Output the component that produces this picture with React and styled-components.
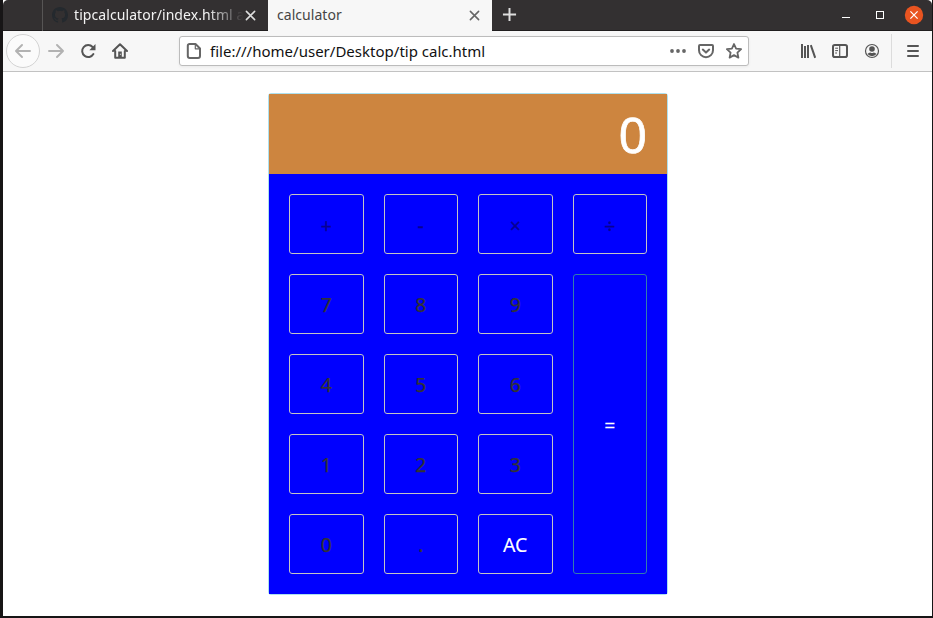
import React from "react";
import styled, { createGlobalStyle } from "styled-components";

const Global = createGlobalStyle`
  * { box-sizing: border-box; }
  body { margin: 0; background: #fff; font-family: "Noto Sans", "Open Sans", sans-serif; }
  button { font: inherit; background: none; border: 0; padding: 0; }
`;

const Window = styled.div`
  width: 933px;
  height: 618px;
  display: flex;
  flex-direction: column;
  overflow: hidden;
  background: #fff;
  border: solid #171516;
  border-width: 0 1px 2px 3px;
`;

const TabBar = styled.div`
  height: 31px;
  flex: none;
  display: flex;
  background: #333031;
  border-radius: 5px 5px 0 0;
  box-shadow: inset 0 -1px #201e1f;
`;

const PinSpace = styled.div`
  width: 40px;
  height: 31px;
  border-right: 1px solid #575555;
`;

const Tab = styled.div`
  width: ${(p) => p.$width}px;
  height: 31px;
  display: flex;
  align-items: center;
  padding: 0 12px 1px 9px;
  color: ${(p) => (p.$active ? "#454545" : "#f3f3f3")};
  background: ${(p) => (p.$active ? "#f7f7f7" : "transparent")};
`;

const TabTitle = styled.span`
  flex: 1;
  min-width: 0;
  overflow: hidden;
  white-space: nowrap;
  font-size: 14px;
  line-height: 20px;
  letter-spacing: ${(p) => p.$tracking}px;
  margin-left: ${(p) => p.$indent || 0}px;
  mask-image: ${(p) => (p.$fade ? "linear-gradient(to right, #000 78%, transparent 99%)" : "none")};
`;

const NewTab = styled.button`
  width: 34px;
  display: grid;
  place-items: center;
  padding-bottom: 2px;
`;

const WindowControls = styled.div`
  margin-left: auto;
  display: flex;
  padding-right: 1px;
`;

const Control = styled.button`
  width: 34px;
  height: 30px;
  display: grid;
  place-items: center;
`;

const Toolbar = styled.div`
  height: 41px;
  flex: none;
  display: flex;
  align-items: center;
  background: #f7f7f7;
  border-bottom: 1px solid #c2c2c2;
`;

const Back = styled.button`
  width: 34px;
  height: 34px;
  margin-left: 3px;
  border: 1px solid #d3d3d3;
  border-radius: 50%;
  display: grid;
  place-items: center;
  color: #b2b2b2;
  background: #fbfbfb;
`;

const Tool = styled.button`
  width: 32px;
  height: 32px;
  display: grid;
  place-items: center;
  color: ${(p) => (p.$disabled ? "#b2b2b2" : "#555")};
`;

const AddressBar = styled.div`
  width: 570px;
  height: 30px;
  margin: 0 43px 0 43px;
  padding: 0 6px;
  display: flex;
  align-items: center;
  border: 1px solid #bcbcbc;
  border-radius: 3px;
  background: #fff;
  color: #666;
  box-shadow: 0 1px 3px rgba(0, 0, 0, 0.06);
`;

const Address = styled.span`
  margin: 0 auto 0 8px;
  font-size: 15px;
  line-height: 20px;
  letter-spacing: 0.01px;
  white-space: nowrap;
  color: #111;
`;

const AddressActions = styled.div`
  display: flex;
  gap: 12px;
`;

const Divider = styled.span`
  width: 1px;
  height: 34px;
  margin: 0 5px 0 3px;
  background: #dcdcdc;
`;

const Page = styled.main`
  flex: 1;
  display: flex;
  justify-content: center;
  align-items: flex-start;
  padding: 21px 0 0 1px;
`;

const Calculator = styled.section`
  width: 400px;
  border: 1px solid #ade0ee;
  border-radius: 3px;
`;

const Display = styled.output`
  display: block;
  height: 80px;
  padding-right: 20px;
  background: #cd853f;
  color: #fff;
  font-size: 50px;
  line-height: 80px;
  text-align: right;
  -webkit-text-stroke: 0.7px #fff;
`;

const Keys = styled.div`
  padding: 20px;
  display: grid;
  grid-template-columns: repeat(4, 1fr);
  grid-template-rows: repeat(5, 60px);
  gap: 20px;
  background: #00f;
`;

const tones = { operator: "#080090", digit: "#333", light: "#fff" };

const Key = styled.button`
  grid-area: ${(p) => (p.$tall ? "2 / 4 / 6 / 5" : "auto")};
  border: 1px solid ${(p) => (p.$tall ? "#337cac" : "#c4c4c4")};
  border-radius: 3px;
  color: ${(p) => tones[p.$tone]};
  font-size: 19.5px;
  line-height: 26px;
  padding-top: ${(p) => (p.$tall || p.$tone === "operator" ? 4 : 2)}px;
  -webkit-text-stroke: ${(p) => (p.$tone === "light" ? 0.1 : 0.25)}px currentColor;
`;

const Icon = ({ size = 16, width = 2, children, ...rest }) => (
  <svg width={size} height={size} viewBox="0 0 16 16" fill="none" stroke="currentColor"
    strokeWidth={width} strokeLinecap="round" strokeLinejoin="round" {...rest}>
    {children}
  </svg>
);

const CloseIcon = ({ width = 1.6, color }) => (
  <Icon size={11} width={width * 1.4} color={color}><path d="M2 2l12 12M14 2L2 14" /></Icon>
);

const GithubMark = () => (
  <svg width="16" height="16" viewBox="0 0 16 16" fill="#24292e">
    <path d="M8 0C3.58 0 0 3.58 0 8c0 3.54 2.29 6.53 5.47 7.59.4.07.55-.17.55-.38v-1.49c-2.01.37-2.53-.49-2.69-.94-.09-.23-.48-.94-.82-1.13-.28-.15-.68-.52-.01-.53.63-.01 1.08.58 1.23.82.72 1.21 1.87.87 2.33.66.07-.52.28-.87.51-1.07-1.78-.2-3.64-.89-3.64-3.95 0-.87.31-1.59.82-2.15-.08-.2-.36-1.02.08-2.12 0 0 .67-.21 2.2.82a7.6 7.6 0 014 0c1.53-1.04 2.2-.82 2.2-.82.44 1.1.16 1.92.08 2.12.51.56.82 1.27.82 2.15 0 3.07-1.87 3.75-3.65 3.95.29.25.54.73.54 1.48v2.2c0 .21.15.46.55.38A8 8 0 0016 8c0-4.42-3.58-8-8-8z" />
  </svg>
);

const keys = [
  ["+", "operator"], ["-", "operator"], ["×", "operator"], ["÷", "operator"],
  ["7", "digit"], ["8", "digit"], ["9", "digit"],
  ["4", "digit"], ["5", "digit"], ["6", "digit"],
  ["1", "digit"], ["2", "digit"], ["3", "digit"],
  ["0", "digit"], [".", "digit"], ["AC", "light"],
];

export default function App() {
  return (
    <Window>
      <Global />
      <TabBar>
        <PinSpace />
        <Tab $width={225}>
          <GithubMark />
          <TabTitle $fade $indent={6} $tracking={0.08}>tipcalculator/index.html a</TabTitle>
          <CloseIcon color="#dedede" />
        </Tab>
        <Tab $active $width={224}>
          <TabTitle $tracking={0.05}>calculator</TabTitle>
          <CloseIcon color="#666" />
        </Tab>
        <NewTab aria-label="New tab">
          <Icon width={2.1} size={15} color="#dedede"><path d="M8 1v14M1 8h14" strokeLinecap="butt" /></Icon>
        </NewTab>
        <WindowControls>
          <Control aria-label="Minimize">
            <svg width="8" height="8" viewBox="0 0 8 8"><path d="M0 6.5h8" stroke="#fff" /></svg>
          </Control>
          <Control aria-label="Maximize">
            <svg width="8" height="8" viewBox="0 0 8 8" fill="none"><rect x=".5" y=".5" width="7" height="7" stroke="#fff" /></svg>
          </Control>
          <Control aria-label="Close">
            <svg width="20" height="20" viewBox="0 0 20 20">
              <circle cx="10" cy="10" r="9.2" fill="#e95420" />
              <path d="M6.4 6.4l7.2 7.2M13.6 6.4l-7.2 7.2" stroke="#fff" strokeWidth="1.2" />
            </svg>
          </Control>
        </WindowControls>
      </TabBar>

      <Toolbar>
        <Back aria-label="Back">
          <Icon width={1.9}><path d="M15 8H1.5M7 2L1 8l6 6" /></Icon>
        </Back>
        <Tool $disabled aria-label="Forward">
          <Icon width={1.9}><path d="M1 8h13.5M9 2l6 6-6 6" /></Icon>
        </Tool>
        <Tool aria-label="Reload">
          <Icon>
            <path d="M13.4 11A6 6 0 1 1 12.6 4" />
            <path d="M15.5 1v6.2H9.3z" fill="currentColor" stroke="none" />
          </Icon>
        </Tool>
        <Tool aria-label="Home">
          <Icon>
            <path d="M1 8l7-6.8L15 8M3.2 8v6.8h9.6V8" />
            <path d="M6.2 14.5V8.5h3.6v6z" fill="currentColor" stroke="none" />
            <path d="M8.4 11.2v.1" stroke="#f7f7f7" strokeWidth="1" />
          </Icon>
        </Tool>
        <AddressBar>
          <Icon>
            <path d="M3.5 1h6L14 5.5V13a2 2 0 0 1-2 2H3.8a2 2 0 0 1-2-2V2.7A1.7 1.7 0 0 1 3.5 1z" />
            <path d="M9.3 1.5v4.3h4.4" strokeWidth="1.2" />
          </Icon>
          <Address>file:///home/user/Desktop/tip calc.html</Address>
          <AddressActions>
            <Icon><g fill="currentColor" stroke="none"><circle cx="2" cy="8" r="1.9" /><circle cx="8" cy="8" r="1.9" /><circle cx="14" cy="8" r="1.9" /></g></Icon>
            <Icon>
              <path d="M2 2h12a1 1 0 0 1 1 1v4.2a7 7 0 0 1-14 0V3a1 1 0 0 1 1-1z" />
              <path d="M4.8 6.6L8 9.6l3.2-3" />
            </Icon>
            <Icon width={1.8}><path d="M8 1l2.1 4.6 5 .6-3.7 3.4 1 5L8 12.1l-4.4 2.5 1-5L.9 6.2l5-.6z" /></Icon>
          </AddressActions>
        </AddressBar>
        <Tool aria-label="Library">
          <Icon><path d="M2 1v14M5 3v12M8 2v13M10.8 2.2l4.4 12.6" strokeLinecap="butt" /></Icon>
        </Tool>
        <Tool aria-label="Sidebars">
          <Icon>
            <rect x="1" y="2" width="14" height="12" rx="1.8" />
            <path d="M7.7 2v12" strokeWidth="1.2" />
            <path d="M3.2 5.2H6M3.2 7.6H6M3.2 10H5" strokeWidth="1" strokeLinecap="butt" />
          </Icon>
        </Tool>
        <Tool aria-label="Account">
          <Icon width={1.2}>
            <circle cx="8" cy="8" r="6.5" />
            <circle cx="8" cy="6" r="2.8" fill="currentColor" stroke="none" />
            <path d="M3.5 11.1q1.3-1.6 2.7-1.7 1.8 1 3.6 0 1.4.1 2.7 1.7Q10.7 13.2 8 13.2t-4.5-2.1z" fill="currentColor" stroke="none" />
          </Icon>
        </Tool>
        <Divider />
        <Tool aria-label="Menu">
          <Icon><path d="M3 3h10M3 8h10M3 13h10" /></Icon>
        </Tool>
      </Toolbar>

      <Page>
        <Calculator>
          <Display>0</Display>
          <Keys>
            {keys.map(([label, tone]) => <Key key={label} $tone={tone}>{label}</Key>)}
            <Key $tone="light" $tall>=</Key>
          </Keys>
        </Calculator>
      </Page>
    </Window>
  );
}
